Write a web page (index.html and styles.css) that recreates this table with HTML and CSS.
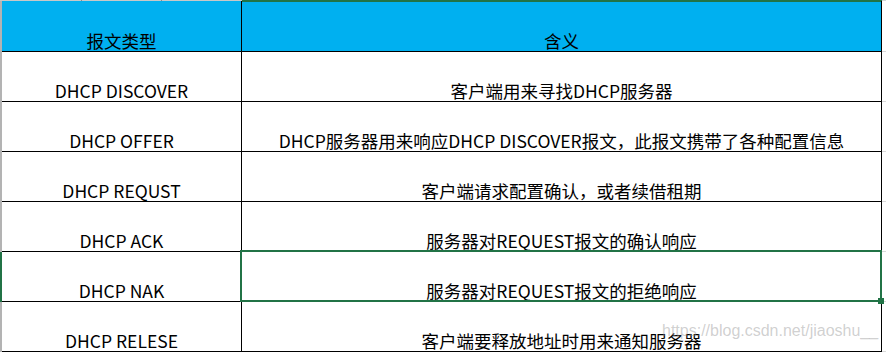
FILE: index.html
```html
<!DOCTYPE html>
<html lang="zh">
<head>
<meta charset="utf-8">
<title>DHCP 报文类型</title>
<link rel="stylesheet" href="styles.css">
</head>
<body>
<div class="sheet">
  <div class="top">
    <div class="top-a"><span class="tick t1"></span><span class="tick t2"></span></div>
    <div class="top-b"></div>
    <div class="top-c"></div>
  </div>
  <div class="row head">
    <div class="rh"></div>
    <div class="cell c1">报文类型</div>
    <div class="cell c2 c2-head">含义</div>
    <div class="gap"></div>
  </div>
  <div class="row">
    <div class="rh"></div>
    <div class="cell c1">DHCP DISCOVER</div>
    <div class="cell c2">客户端用来寻找DHCP服务器</div>
    <div class="gap"></div>
  </div>
  <div class="row">
    <div class="rh"></div>
    <div class="cell c1">DHCP OFFER</div>
    <div class="cell c2">DHCP服务器用来响应DHCP DISCOVER报文，此报文携带了各种配置信息</div>
    <div class="gap"></div>
  </div>
  <div class="row">
    <div class="rh"></div>
    <div class="cell c1">DHCP REQUST</div>
    <div class="cell c2">客户端请求配置确认，或者续借租期</div>
    <div class="gap"></div>
  </div>
  <div class="row">
    <div class="rh"></div>
    <div class="cell c1">DHCP ACK</div>
    <div class="cell c2">服务器对REQUEST报文的确认响应</div>
    <div class="gap"></div>
  </div>
  <div class="row">
    <div class="rh rh-sel"></div>
    <div class="cell c1">DHCP NAK</div>
    <div class="cell c2 selected">服务器对REQUEST报文的拒绝响应<span class="sel"></span><span class="handle"></span></div>
    <div class="gap"></div>
  </div>
  <div class="row">
    <div class="rh"></div>
    <div class="cell c1">DHCP RELESE</div>
    <div class="cell c2">客户端要释放地址时用来通知服务器</div>
    <div class="gap"></div>
  </div>
  <div class="wm">https://blog.csdn.net/jiaoshu__</div>
</div>
</body>
</html>
```
FILE: styles.css
```css
html, body {
  margin: 0;
  padding: 0;
  background: #ffffff;
}
.sheet {
  position: relative;
  width: 886px;
  height: 352px;
  overflow: hidden;
  font-family: "Noto Sans CJK SC", sans-serif;
  font-size: 17.5px;
  color: #000;
}
.top {
  display: flex;
  height: 1px;
}
.top-a {
  position: relative;
  width: 242px;
  height: 1px;
  background: #c8c8c8;
}
.tick {
  position: absolute;
  top: 0;
  width: 1px;
  height: 1px;
  background: #8c8c8c;
}
.t1 { left: 81px; }
.t2 { left: 161px; }
.top-b {
  width: 640px;
  height: 1px;
  background: #217346;
}
.top-c {
  width: 4px;
  height: 1px;
  background: #d4d4d4;
}
.row {
  display: grid;
  grid-template-columns: 2px 240px 640px 4px;
  height: 50px;
}
.row.head {
  height: 51px;
}
.rh {
  background: #b3b3b3;
}
.rh-sel {
  background: #217346;
}
.cell {
  box-sizing: border-box;
  display: flex;
  justify-content: center;
  align-items: flex-end;
  border-right: 1px solid #000;
  border-bottom: 1px solid #000;
  line-height: 20px;
  padding-bottom: 0;
  white-space: nowrap;
}
.head .cell {
  background: #00b0f0;
}
.c2-head {
  box-shadow: inset 0 1px 0 #217346;
}
.gap {
  box-sizing: border-box;
  border-bottom: 1px solid #d9d9d9;
}
.selected {
  position: relative;
}
.sel {
  position: absolute;
  left: -2px;
  top: -2px;
  right: -1px;
  bottom: -1px;
  border: 2px solid #217346;
  pointer-events: none;
}
.handle {
  position: absolute;
  right: -3px;
  bottom: -3px;
  width: 6px;
  height: 6px;
  background: #217346;
}
.wm {
  position: absolute;
  left: 662px;
  top: 322px;
  font-family: "Liberation Sans", Arial, sans-serif;
  font-size: 16px;
  line-height: 18px;
  color: rgba(150, 150, 150, 0.45);
  white-space: nowrap;
}
```
